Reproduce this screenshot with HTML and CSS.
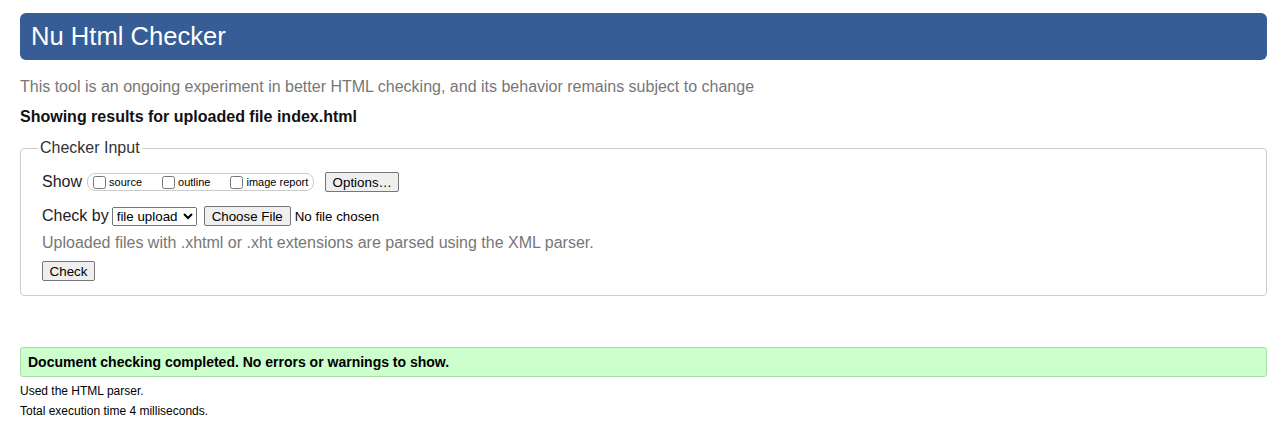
FILE: index.html
```html
<!DOCTYPE html>
<html lang="en">
<head>
<meta charset="utf-8">
<title>Showing results for uploaded file index.html - Nu Html Checker</title>
<link rel="stylesheet" href="styles.css">
</head>
<body>
<h1 class="title">Nu Html Checker</h1>
<p class="intro">This tool is an ongoing experiment in better HTML checking, and its behavior remains subject to change</p>
<p class="showing">Showing results for uploaded file index.html</p>
<form class="checker">
  <fieldset class="box">
    <legend class="legend">Checker Input</legend>
    <div class="row">
      <span class="lbl">Show</span>
      <span class="pill">
        <label class="opt"><input type="checkbox" class="cb">source</label>
        <label class="opt"><input type="checkbox" class="cb">outline</label>
        <label class="opt"><input type="checkbox" class="cb">image report</label>
      </span>
      <button type="button" class="btn btn-options">Options…</button>
    </div>
    <div class="row">
      <span class="lbl">Check by</span>
      <select class="sel"><option>file upload</option></select>
      <button type="button" class="btn btn-file">Choose File</button>
      <span class="nofile">No file chosen</span>
    </div>
    <p class="note">Uploaded files with .xhtml or .xht extensions are parsed using the XML parser.</p>
    <div class="row-btn">
      <button type="button" class="btn btn-check">Check</button>
    </div>
  </fieldset>
</form>
<p class="success">Document checking completed. No errors or warnings to show.</p>
<p class="details">Used the HTML parser.</p>
<p class="details">Total execution time 4 milliseconds.</p>
</body>
</html>
```
FILE: styles.css
```css
html, body {
  margin: 0;
  background: #fff;
}
body {
  padding: 13px 17px 0 20px;
  font-family: "Liberation Sans", Arial, sans-serif;
  color: #000;
}
.title {
  margin: 0;
  height: 47px;
  line-height: 47px;
  padding: 0 11px;
  background: #365d96;
  color: #fff;
  font-size: 25.6px;
  font-weight: normal;
  border-radius: 6px;
}
.intro {
  margin: 18px 0 0;
  font-size: 16px;
  line-height: 18px;
  color: #777;
}
.showing {
  margin: 12px 0 0;
  font-size: 16px;
  line-height: 18px;
  font-weight: bold;
  color: #111;
}
.checker {
  margin: 13px 0 0;
}
.box {
  margin: 0;
  border: 1px solid #ccc;
  border-radius: 4px;
  padding: 13px 20px 14px 21px;
}
.legend {
  margin-left: -4px;
  padding: 0 2px;
  font-size: 16px;
  line-height: 18px;
  color: #333;
}
.row {
  display: flex;
  align-items: center;
  height: 24px;
}
.row + .row {
  margin-top: 10px;
}
.lbl {
  font-size: 16px;
  color: #222;
}
.pill {
  display: inline-flex;
  align-items: center;
  margin-left: 5px;
  height: 16px;
  padding: 0 5px 0 1px;
  border: 1px solid #ccc;
  border-radius: 8px;
}
.opt {
  display: inline-flex;
  align-items: center;
  font-size: 11px;
  color: #000;
  margin-right: 16px;
}
.opt:last-child {
  margin-right: 0;
}
.cb {
  margin: 0 3px 0 4px;
  width: 13px;
  height: 13px;
}
.btn {
  font-family: "Liberation Sans", Arial, sans-serif;
  font-size: 13.33px;
  height: 20px;
  padding: 0 6px;
  background: #efefef;
  color: #000;
  border: 1px solid #767676;
  border-radius: 2px;
}
.btn-options {
  margin-left: 11px;
  width: 74px;
}
.sel {
  margin-left: 3px;
  height: 19px;
  width: 85px;
  font-family: "Liberation Sans", Arial, sans-serif;
  font-size: 13.33px;
  padding: 0;
}
.btn-file {
  margin-left: 7px;
  width: 87px;
}
.nofile {
  margin-left: 4px;
  font-size: 13.33px;
}
.note {
  margin: 5px 0 0;
  font-size: 16px;
  line-height: 20px;
  color: #777;
}
.row-btn {
  margin-top: 8px;
  display: flex;
}
.btn-check {
  width: 53px;
}
.success {
  margin: 51px 0 0;
  height: 28px;
  line-height: 28px;
  padding: 0 7px;
  background: #ccffcc;
  border: 1px solid #aaddaa;
  border-radius: 3px;
  font-size: 14px;
  font-weight: bold;
}
.details {
  margin: 0;
  font-size: 12px;
  line-height: 20px;
}
.success + .details {
  margin-top: 4px;
}
```
